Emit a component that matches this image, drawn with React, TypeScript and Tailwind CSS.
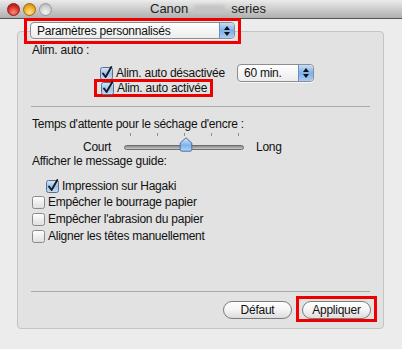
import React from 'react';

const Check = ({ checked }: { checked?: boolean }) => (
  <svg width="13" height="13" viewBox="0 0 13 13" className="shrink-0 overflow-visible">
    <defs>
      <linearGradient id="cbOff" x1="0" y1="0" x2="0" y2="1">
        <stop offset="0" stopColor="#ffffff" />
        <stop offset="1" stopColor="#dedede" />
      </linearGradient>
      <linearGradient id="cbOn" x1="0" y1="0" x2="0" y2="1">
        <stop offset="0" stopColor="#d6e8fb" />
        <stop offset="0.5" stopColor="#9cc3ee" />
        <stop offset="1" stopColor="#c5ddf6" />
      </linearGradient>
    </defs>
    <rect x="0.5" y="0.5" width="12" height="12" rx="2" fill={checked ? 'url(#cbOn)' : 'url(#cbOff)'} stroke={checked ? '#5a6f8c' : '#8a8a8a'} />
    {checked && (
      <path d="M3 6.5 L5.6 10 L11.3 0" fill="none" stroke="#1a1a1a" strokeWidth="1.9" strokeLinecap="round" strokeLinejoin="round" />
    )}
  </svg>
);

const Arrows = () => (
  <span className="flex h-full w-[15px] shrink-0 flex-col items-center justify-center gap-[2px] rounded-r-[4px] border-l border-[#6f8fb8] bg-gradient-to-b from-[#c6def8] via-[#7fb0ea] to-[#a9ccf3]">
    <svg width="6" height="4" viewBox="0 0 6 4"><path d="M0 4 L3 0 L6 4 Z" fill="#111" /></svg>
    <svg width="6" height="4" viewBox="0 0 6 4"><path d="M0 0 L3 4 L6 0 Z" fill="#111" /></svg>
  </span>
);

const Popup = ({ label, className }: { label: string; className: string }) => (
  <div className={`flex items-center overflow-hidden rounded-[4px] border border-[#8d8d8d] bg-gradient-to-b from-white to-[#ececec] shadow-[0_1px_0_rgba(255,255,255,0.7)] ${className}`}>
    <span className="flex-1 pl-[6px] leading-none">{label}</span>
    <Arrows />
  </div>
);

const Button = ({ label }: { label: string }) => (
  <div className="flex h-[18px] w-[69px] items-center justify-center rounded-full border border-[#7c7c7c] bg-gradient-to-b from-white via-[#f4f4f4] to-[#dcdcdc] leading-none">
    {label}
  </div>
);

const Row = ({ label, checked, className }: { label: string; checked?: boolean; className: string }) => (
  <div className={`flex h-[16px] items-center gap-[3px] ${className}`}>
    <Check checked={checked} />
    <span className="leading-none">{label}</span>
  </div>
);

export default function App() {
  return (
    <div className="relative h-[349px] w-[402px] overflow-hidden bg-[#ececec] font-['Liberation_Sans',sans-serif] text-[12px] tracking-[-0.25px] text-[#111]">
      {/* title bar */}
      <div className="flex h-[19px] items-center border-b border-[#555] bg-gradient-to-b from-[#ebebeb] to-[#b0b0b0]">
        <div className="ml-[7px] flex gap-[3px]">
          <span className="h-[13px] w-[13px] rounded-full border border-[#8c1d1d] bg-[radial-gradient(circle_at_50%_75%,#ff8a7c,#d42a1f_60%,#9a1710)]" />
          <span className="h-[13px] w-[13px] rounded-full border border-[#9a6a10] bg-[radial-gradient(circle_at_50%_75%,#ffe58a,#f0a621_60%,#b77710)]" />
          <span className="h-[13px] w-[13px] rounded-full border border-[#9a9a9a] bg-[radial-gradient(circle_at_50%_75%,#f2f2f2,#cfcfcf_60%,#a8a8a8)]" />
        </div>
        <div className="ml-[98px] flex items-center text-[13px] tracking-normal text-[#222]">
          <span>Canon</span>
          <span className="mx-[6px] h-[8px] w-[31px] rounded-[3px] bg-[#c4c4c4] blur-[1.5px]" />
          <span>series</span>
        </div>
      </div>

      <div className="pl-[17px] pt-[12px]">
        <div className="relative h-[298px] w-[367px] rounded-[4px] border border-[#c4c4c4] bg-[#e2e2e2]">
          {/* preset popup, over the group edge */}
          <div className="absolute left-[6px] top-[-14px] border-[3px] border-[#ee0000] pl-[3px] pr-[3px] pt-[1px] pb-[2px]">
            <Popup label="Paramètres personnalisés" className="h-[17px] w-[205px]" />
          </div>

          <div className="flex flex-col">
            <div className="ml-[14px] mt-[10px] h-[16px] leading-[16px]">Alim. auto :</div>

            <div className="ml-[82px] mt-[6px] flex h-[18px] items-center">
              <Check checked />
              <span className="ml-[3px] w-[121px] leading-none">Alim. auto désactivée</span>
              <Popup label="60 min." className="h-[18px] w-[77px]" />
            </div>

            <div className="ml-[76px] mt-[-3px] flex h-[18px] w-[119px] items-center border-[3px] border-[#ee0000] pl-[4px]">
              <Check checked />
              <span className="ml-[3px] leading-none">Alim. auto activée</span>
            </div>

            <div className="mx-[13px] mt-[9px] h-px bg-[#a9a9a9]" />

            <div className="ml-[14px] mt-[9px] h-[16px] leading-[16px]">Temps d'attente pour le séchage d'encre :</div>

            <div className="ml-[112px] mt-[1px] flex h-[3px] w-[109px] justify-between">
              {[0, 1, 2, 3, 4].map((i) => (
                <span key={i} className="h-[3px] w-px bg-[#8f8f8f]" />
              ))}
            </div>

            <div className="ml-[65px] mt-[4px] flex h-[14px] items-center">
              <span className="w-[41px] leading-none">Court</span>
              <div className="relative h-[5px] w-[120px] rounded-full border border-[#6e6e6e] bg-gradient-to-b from-[#8a8a8a] to-[#c9c9c9]">
                <svg width="14" height="15" viewBox="0 0 14 15" className="absolute left-[54px] top-[-9px]">
                  <defs>
                    <linearGradient id="knob" x1="0" y1="0" x2="0" y2="1">
                      <stop offset="0" stopColor="#d8e9fb" />
                      <stop offset="0.55" stopColor="#7fb1ec" />
                      <stop offset="1" stopColor="#b7d5f6" />
                    </linearGradient>
                  </defs>
                  <path d="M7 0.8 L12.8 6 L12.8 12.5 Q12.8 14.2 11 14.2 L3 14.2 Q1.2 14.2 1.2 12.5 L1.2 6 Z" fill="url(#knob)" stroke="#4d6f9c" strokeWidth="1" />
                </svg>
              </div>
              <span className="ml-[12px] leading-none">Long</span>
            </div>

            <div className="ml-[14px] h-[14px] leading-[14px]">Afficher le message guide:</div>

            <Row label="Impression sur Hagaki" checked className="ml-[28px] mt-[10px]" />
            <Row label="Empêcher le bourrage papier" className="ml-[14px]" />
            <Row label="Empêcher l'abrasion du papier" className="ml-[14px] mt-[1px]" />
            <Row label="Aligner les têtes manuellement" className="ml-[14px] mt-[1px]" />

            <div className="mx-[13px] mt-[47px] h-px bg-[#a9a9a9]" />

            <div className="mr-[6px] mt-[4px] flex items-start justify-end gap-[4px]">
              <div className="mt-[5px]">
                <Button label="Défaut" />
              </div>
              <div className="border-[3px] border-[#ee0000] px-[3px] pt-[2px]">
                <Button label="Appliquer" />
              </div>
            </div>
          </div>
        </div>
      </div>
    </div>
  );
}
